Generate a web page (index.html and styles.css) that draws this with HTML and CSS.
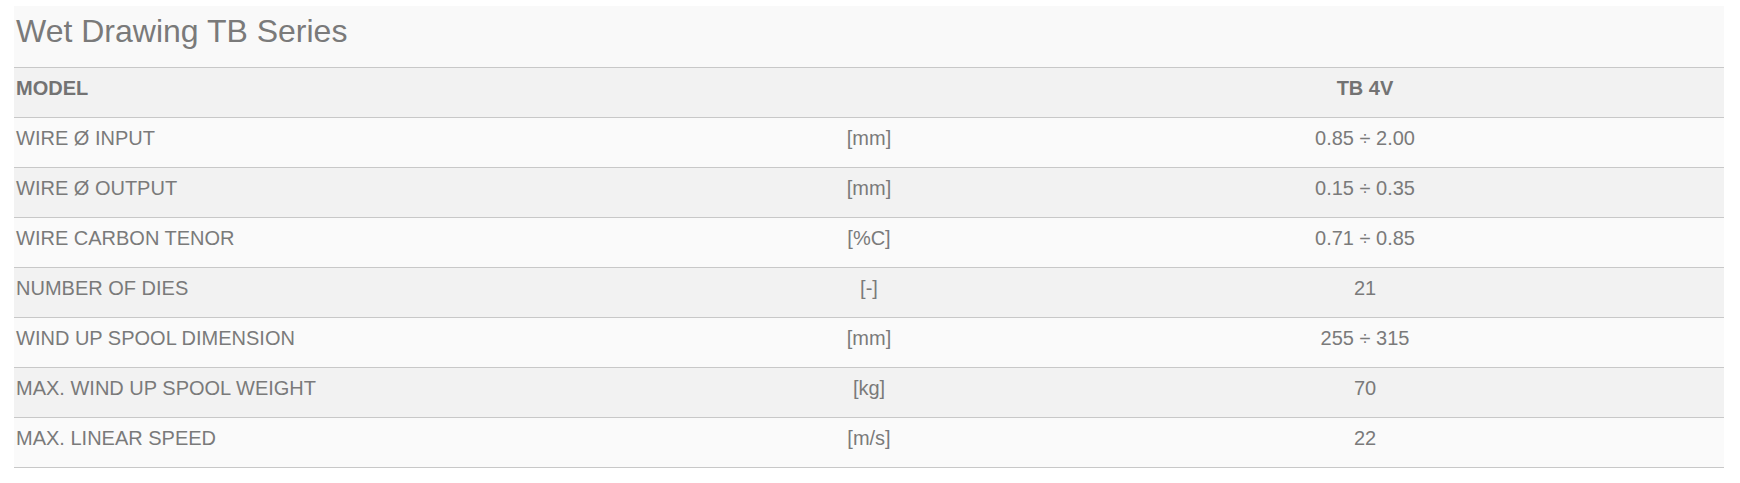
FILE: index.html
```html
<!DOCTYPE html>
<html>
<head>
<meta charset="utf-8">
<link rel="stylesheet" href="styles.css">
</head>
<body>
<div class="page">
  <div class="panel">
    <h1 class="title">Wet Drawing TB Series</h1>
    <table class="specs">
      <colgroup>
        <col class="c-name"><col class="c-unit"><col class="c-val">
      </colgroup>
      <thead>
        <tr><th class="name">MODEL</th><th class="unit"></th><th class="val">TB 4V</th></tr>
      </thead>
      <tbody>
        <tr><td class="name">WIRE Ø INPUT</td><td class="unit">[mm]</td><td class="val">0.85 ÷ 2.00</td></tr>
        <tr><td class="name">WIRE Ø OUTPUT</td><td class="unit">[mm]</td><td class="val">0.15 ÷ 0.35</td></tr>
        <tr><td class="name">WIRE CARBON TENOR</td><td class="unit">[%C]</td><td class="val">0.71 ÷ 0.85</td></tr>
        <tr><td class="name">NUMBER OF DIES</td><td class="unit">[-]</td><td class="val">21</td></tr>
        <tr><td class="name">WIND UP SPOOL DIMENSION</td><td class="unit">[mm]</td><td class="val">255 ÷ 315</td></tr>
        <tr><td class="name">MAX. WIND UP SPOOL WEIGHT</td><td class="unit">[kg]</td><td class="val">70</td></tr>
        <tr><td class="name">MAX. LINEAR SPEED</td><td class="unit">[m/s]</td><td class="val">22</td></tr>
      </tbody>
    </table>
  </div>
</div>
</body>
</html>
```

FILE: styles.css
```css
html, body {
  margin: 0;
  padding: 0;
  background: #ffffff;
}
.page {
  padding: 6px 16px 0 14px;
  font-family: "Liberation Sans", Arial, sans-serif;
  color: #7a7a7a;
}
.panel {
  width: 1710px;
  background: #f9f9f9;
}
.title {
  margin: 0;
  padding: 7px 2px 17px 2px;
  font-size: 32px;
  line-height: 37px;
  font-weight: normal;
  color: #7a7a7a;
}
.specs {
  width: 1710px;
  border-collapse: collapse;
  table-layout: fixed;
  font-size: 20px;
}
.c-name { width: 718px; }
.c-unit { width: 274px; }
.c-val { width: 718px; }
.specs th, .specs td {
  height: 23px;
  line-height: 23px;
  padding: 9px 2px 17px 2px;
  vertical-align: top;
  border-top: 1px solid #c8c8c8;
  border-bottom: 1px solid #c8c8c8;
}
.specs th {
  font-weight: bold;
  color: #737373;
  background: #f2f2f2;
}
.specs .name { text-align: left; }
.specs .unit, .specs .val { text-align: center; }
.specs tbody tr:nth-child(odd) td { background: #fafafa; }
.specs tbody tr:nth-child(even) td { background: #f2f2f2; }
```
